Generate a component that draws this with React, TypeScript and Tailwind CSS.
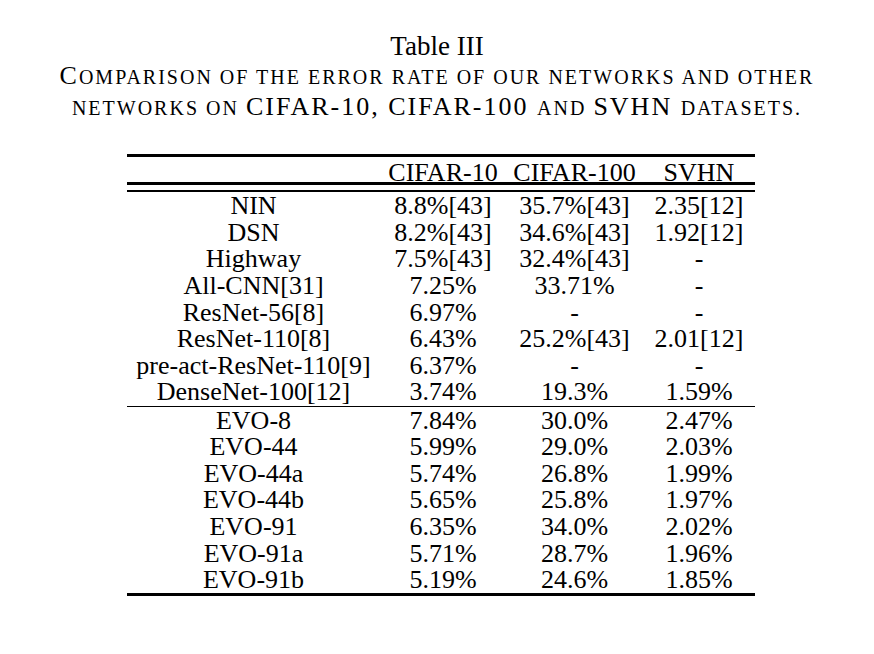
import React from 'react';

type Row = [string, string, string, string];

const baseline: Row[] = [
  ['NIN', '8.8%[43]', '35.7%[43]', '2.35[12]'],
  ['DSN', '8.2%[43]', '34.6%[43]', '1.92[12]'],
  ['Highway', '7.5%[43]', '32.4%[43]', '-'],
  ['All-CNN[31]', '7.25%', '33.71%', '-'],
  ['ResNet-56[8]', '6.97%', '-', '-'],
  ['ResNet-110[8]', '6.43%', '25.2%[43]', '2.01[12]'],
  ['pre-act-ResNet-110[9]', '6.37%', '-', '-'],
  ['DenseNet-100[12]', '3.74%', '19.3%', '1.59%'],
];

const evo: Row[] = [
  ['EVO-8', '7.84%', '30.0%', '2.47%'],
  ['EVO-44', '5.99%', '29.0%', '2.03%'],
  ['EVO-44a', '5.74%', '26.8%', '1.99%'],
  ['EVO-44b', '5.65%', '25.8%', '1.97%'],
  ['EVO-91', '6.35%', '34.0%', '2.02%'],
  ['EVO-91a', '5.71%', '28.7%', '1.96%'],
  ['EVO-91b', '5.19%', '24.6%', '1.85%'],
];

const TableRow: React.FC<{ row: Row }> = ({ row }) => (
  <div className="flex h-[26.6px] items-center leading-none">
    <div className="w-[253px] text-center">{row[0]}</div>
    <div className="w-[126px] text-center">{row[1]}</div>
    <div className="w-[137px] text-center">{row[2]}</div>
    <div className="w-[112px] text-center">{row[3]}</div>
  </div>
);

// small caps by hand: lower-case words set as upper case at a smaller size
const Sc: React.FC<{ children: React.ReactNode }> = ({ children }) => (
  <span className="text-[20px] uppercase">{children}</span>
);

export default function App() {
  return (
    <div className="w-[874px] h-[654px] bg-white text-black font-['Liberation_Serif','Times_New_Roman',serif]">
      {/* Caption */}
      <div className="pt-[32px] text-center text-[26px] leading-[29px]">
        <div className="text-[27px]">Table III</div>
        <div className="tracking-[2px]">
          C<Sc>omparison of the error rate of our networks and other</Sc>
        </div>
        <div className="tracking-[2px]">
          <Sc>networks on </Sc>CIFAR-10, CIFAR-100 <Sc>and </Sc>SVHN <Sc>datasets.</Sc>
        </div>
      </div>

      {/* Table */}
      <div className="ml-[127px] mt-[31px] w-[628px] text-[26px]">
        <div className="h-[2.5px] bg-black" />
        <div className="h-[25.5px] pt-[3px]">
          <TableRow row={['', 'CIFAR-10', 'CIFAR-100', 'SVHN']} />
        </div>
        <div className="h-[2.5px] bg-black" />
        <div className="h-[5px]" />
        <div className="h-[2.5px] bg-black" />
        <div className="pt-[1px]">
          {baseline.map((r) => (
            <TableRow key={r[0]} row={r} />
          ))}
        </div>
        <div className="h-[1.5px] bg-black" />
        <div>
          {evo.map((r) => (
            <TableRow key={r[0]} row={r} />
          ))}
        </div>
        <div className="h-[2.5px] bg-black" />
      </div>
    </div>
  );
}
